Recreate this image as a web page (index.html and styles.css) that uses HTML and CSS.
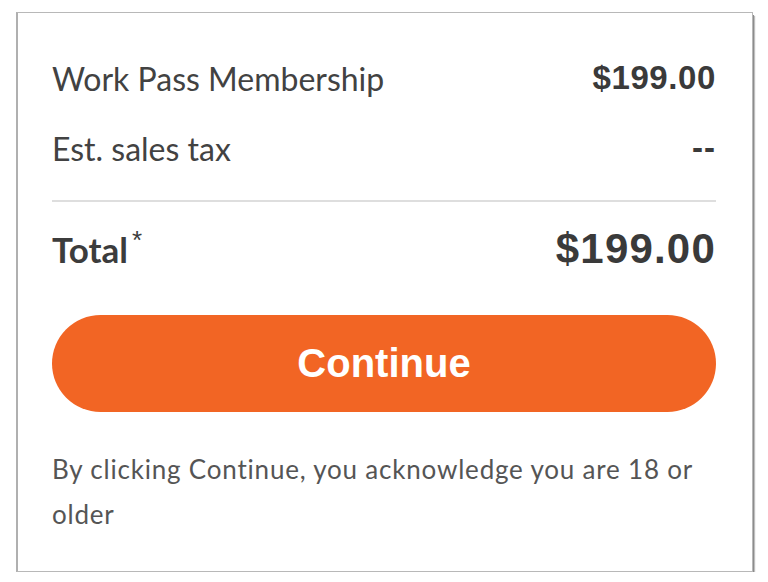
FILE: index.html
```html
<!DOCTYPE html>
<html lang="en">
<head>
<meta charset="utf-8">
<link rel="stylesheet" href="styles.css">
</head>
<body>
<div class="card">
  <div class="row">
    <span class="label">Work Pass Membership</span>
    <span class="price">$199.00</span>
  </div>
  <div class="row row-tax">
    <span class="label">Est. sales tax</span>
    <span class="price dash">--</span>
  </div>
  <div class="divider"></div>
  <div class="row total-row">
    <span class="total-label">Total<sup class="star">*</sup></span>
    <span class="total-price">$199.00</span>
  </div>
  <button class="continue" type="button">Continue</button>
  <p class="note">By clicking Continue, you acknowledge you are 18 or older</p>
</div>
</body>
</html>
```

FILE: styles.css
```css
html, body {
  margin: 0;
  padding: 0;
  background: #ffffff;
}

body {
  font-family: Lato, "Noto Sans", sans-serif;
  color: #404040;
}

.card {
  box-sizing: border-box;
  margin: 12px 0 0 16px;
  width: 737px;
  height: 560px;
  border: 1px solid #b8b8b8;
  border-left: 2px solid #b0b0b0;
  box-shadow: 1px 3px 0 #8c8c8c, 2px 4px 1px rgba(0, 0, 0, 0.25);
  padding: 45px 36px 0 34px;
  display: flex;
  flex-direction: column;
}

.row {
  display: flex;
  justify-content: space-between;
  align-items: center;
  height: 40px;
}

.row-tax {
  margin-top: 30px;
}

.label {
  font-size: 32px;
  font-weight: 400;
  color: #424242;
}

.price {
  font-family: "Liberation Sans", Arial, sans-serif;
  font-weight: 700;
  font-size: 33px;
  letter-spacing: 0.6px;
  color: #3a3a3a;
}

.dash {
  letter-spacing: 1px;
}

.divider {
  margin-top: 32px;
  height: 2px;
  background: #dedede;
}

.total-row {
  margin-top: 22px;
  height: 50px;
}

.total-label {
  font-weight: 700;
  font-size: 35px;
  color: #3c3c3c;
}

.star {
  font-family: "Liberation Sans", Arial, sans-serif;
  font-size: 26px;
  font-weight: 400;
  vertical-align: 0;
  position: relative;
  top: -14px;
  margin-left: 4px;
}

.total-price {
  font-family: "Liberation Sans", Arial, sans-serif;
  font-weight: 700;
  font-size: 42px;
  letter-spacing: 1.2px;
  color: #3a3a3a;
}

.continue {
  margin-top: 41px;
  height: 97px;
  width: 100%;
  border: none;
  border-radius: 49px;
  background: #f26524;
  color: #ffffff;
  font-family: "Liberation Sans", Arial, sans-serif;
  font-weight: 700;
  font-size: 40px;
  padding: 0;
  cursor: pointer;
}

.note {
  margin: 35px 0 0 0;
  font-size: 26px;
  letter-spacing: 0.8px;
  line-height: 45px;
  color: #555555;
}
```
